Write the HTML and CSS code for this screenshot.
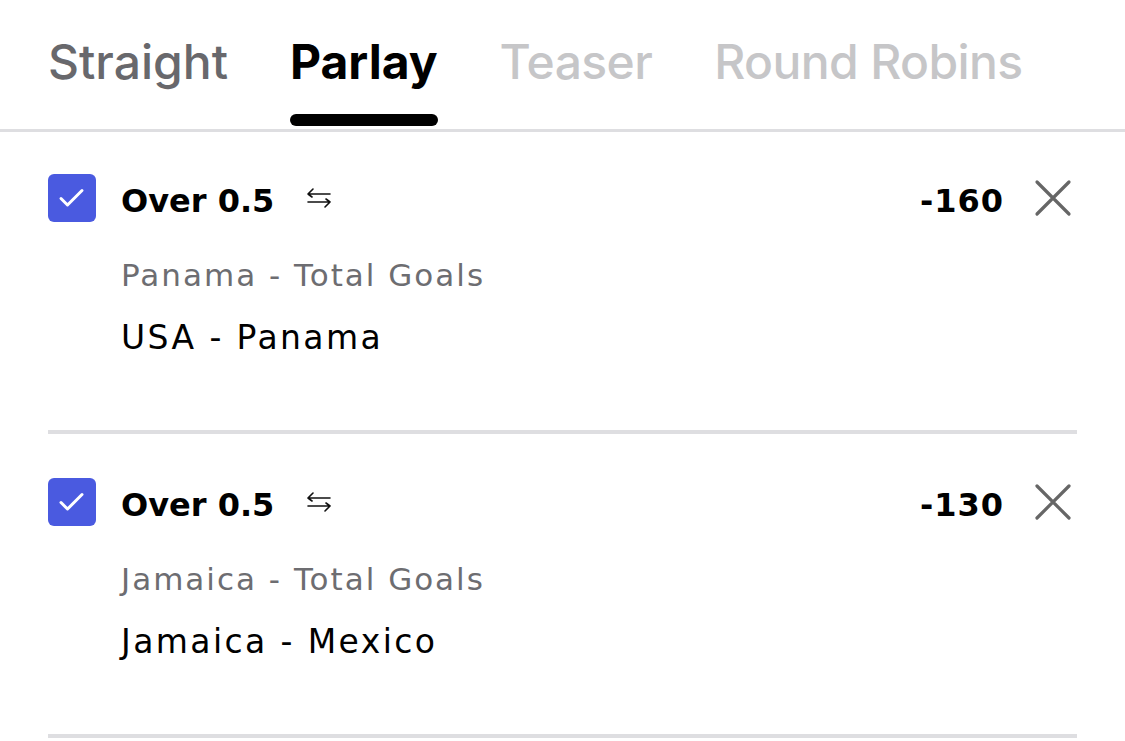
FILE: index.html
```html
<!DOCTYPE html>
<html lang="en">
<head>
    <meta charset="UTF-8">
    <meta name="viewport" content="width=device-width, initial-scale=1.0">
    <title>Bet Slip</title>
    <link rel="stylesheet" href="styles.css">
</head>
<body>
    <nav class="tabs">
        <div class="tab tab-done">Straight<span class="tab-bar"></span></div>
        <div class="tab tab-active">Parlay<span class="tab-bar"></span></div>
        <div class="tab">Teaser<span class="tab-bar"></span></div>
        <div class="tab">Round Robins<span class="tab-bar"></span></div>
    </nav>

    <div class="slip">
        <div class="bet">
            <div class="bet-head">
                <span class="check">
                    <svg viewBox="0 0 48 48" width="48" height="48"><path d="M13 24.5l6.5 6.5L34 16.5" fill="none" stroke="#fff" stroke-width="3" stroke-linecap="round" stroke-linejoin="round"/></svg>
                </span>
                <span class="pick">Over 0.5</span>
                <svg class="swap" viewBox="0 0 26 26" width="26" height="26"><path d="M2 9h22M2 9l5-5M2 9l4 3M24 17H2M24 17l-5 5M24 17l-4-3" fill="none" stroke="#111" stroke-width="1.6" stroke-linecap="round" stroke-linejoin="round"/></svg>
                <span class="odds">-160</span>
                <svg class="remove" viewBox="0 0 40 40" width="40" height="40"><path d="M4 4l32 32M36 4L4 36" stroke="#666" stroke-width="3.2" stroke-linecap="round"/></svg>
            </div>
            <div class="market">Panama - Total Goals</div>
            <div class="match">USA - Panama</div>
        </div>

        <div class="bet">
            <div class="bet-head">
                <span class="check">
                    <svg viewBox="0 0 48 48" width="48" height="48"><path d="M13 24.5l6.5 6.5L34 16.5" fill="none" stroke="#fff" stroke-width="3" stroke-linecap="round" stroke-linejoin="round"/></svg>
                </span>
                <span class="pick">Over 0.5</span>
                <svg class="swap" viewBox="0 0 26 26" width="26" height="26"><path d="M2 9h22M2 9l5-5M2 9l4 3M24 17H2M24 17l-5 5M24 17l-4-3" fill="none" stroke="#111" stroke-width="1.6" stroke-linecap="round" stroke-linejoin="round"/></svg>
                <span class="odds">-130</span>
                <svg class="remove" viewBox="0 0 40 40" width="40" height="40"><path d="M4 4l32 32M36 4L4 36" stroke="#666" stroke-width="3.2" stroke-linecap="round"/></svg>
            </div>
            <div class="market">Jamaica - Total Goals</div>
            <div class="match">Jamaica - Mexico</div>
        </div>
    </div>
</body>
</html>
```

FILE: styles.css
```css
:root {
    --text-color: #000000;
    --muted-color: #6d6d71;
    --tab-color: #68686c;
    --tab-idle: #c6c6c8;
    --line-color: #dedee1;
    --accent-color: #4a5ae0;
}

body {
    margin: 0;
    background: #ffffff;
    color: var(--text-color);
    font-family: 'DejaVu Sans', 'Liberation Sans', sans-serif;
}

/* tab strip */
.tabs {
    display: flex;
    gap: 62px;
    padding: 0 48px;
    border-bottom: 3px solid var(--line-color);
}

.tab {
    display: flex;
    flex-direction: column;
    font-family: 'Inter', sans-serif;
    font-size: 48px;
    font-weight: 500;
    line-height: 54px;
    letter-spacing: -0.6px;
    color: var(--tab-idle);
    padding-top: 35px;
}

.tab-done {
    color: var(--tab-color);
    letter-spacing: 0;
}

.tab-active {
    color: #000;
    font-weight: 700;
    letter-spacing: 0;
}

.tab-bar {
    height: 12px;
    margin-top: 25px;
    margin-bottom: 3px;
    border-radius: 6px;
}

.tab-active .tab-bar {
    background: #000;
}

/* bets */
.slip {
    padding: 0 48px;
}

.bet {
    padding: 42px 0 72px;
    border-bottom: 4px solid var(--line-color);
}

.bet + .bet {
    padding-top: 44px;
}

.bet-head {
    display: flex;
    align-items: center;
    height: 48px;
}

.check {
    width: 48px;
    height: 48px;
    border-radius: 6px;
    background: var(--accent-color);
    margin-right: 25px;
}

.check svg {
    display: block;
}

.pick {
    font-size: 32px;
    font-weight: 700;
    padding-top: 5px;
}

.swap {
    margin-left: 32px;
}

.odds {
    margin-left: auto;
    font-size: 32px;
    font-weight: 700;
    letter-spacing: 1px;
    padding-top: 5px;
}

.remove {
    margin-left: 29px;
    margin-right: 4px;
}

.market,
.match {
    padding-left: 73px;
    line-height: 40px;
}

.market {
    margin-top: 33px;
    font-size: 31px;
    letter-spacing: 2px;
    color: var(--muted-color);
}

.match {
    margin-top: 23px;
    font-size: 33px;
    letter-spacing: 2.4px;
}
```
